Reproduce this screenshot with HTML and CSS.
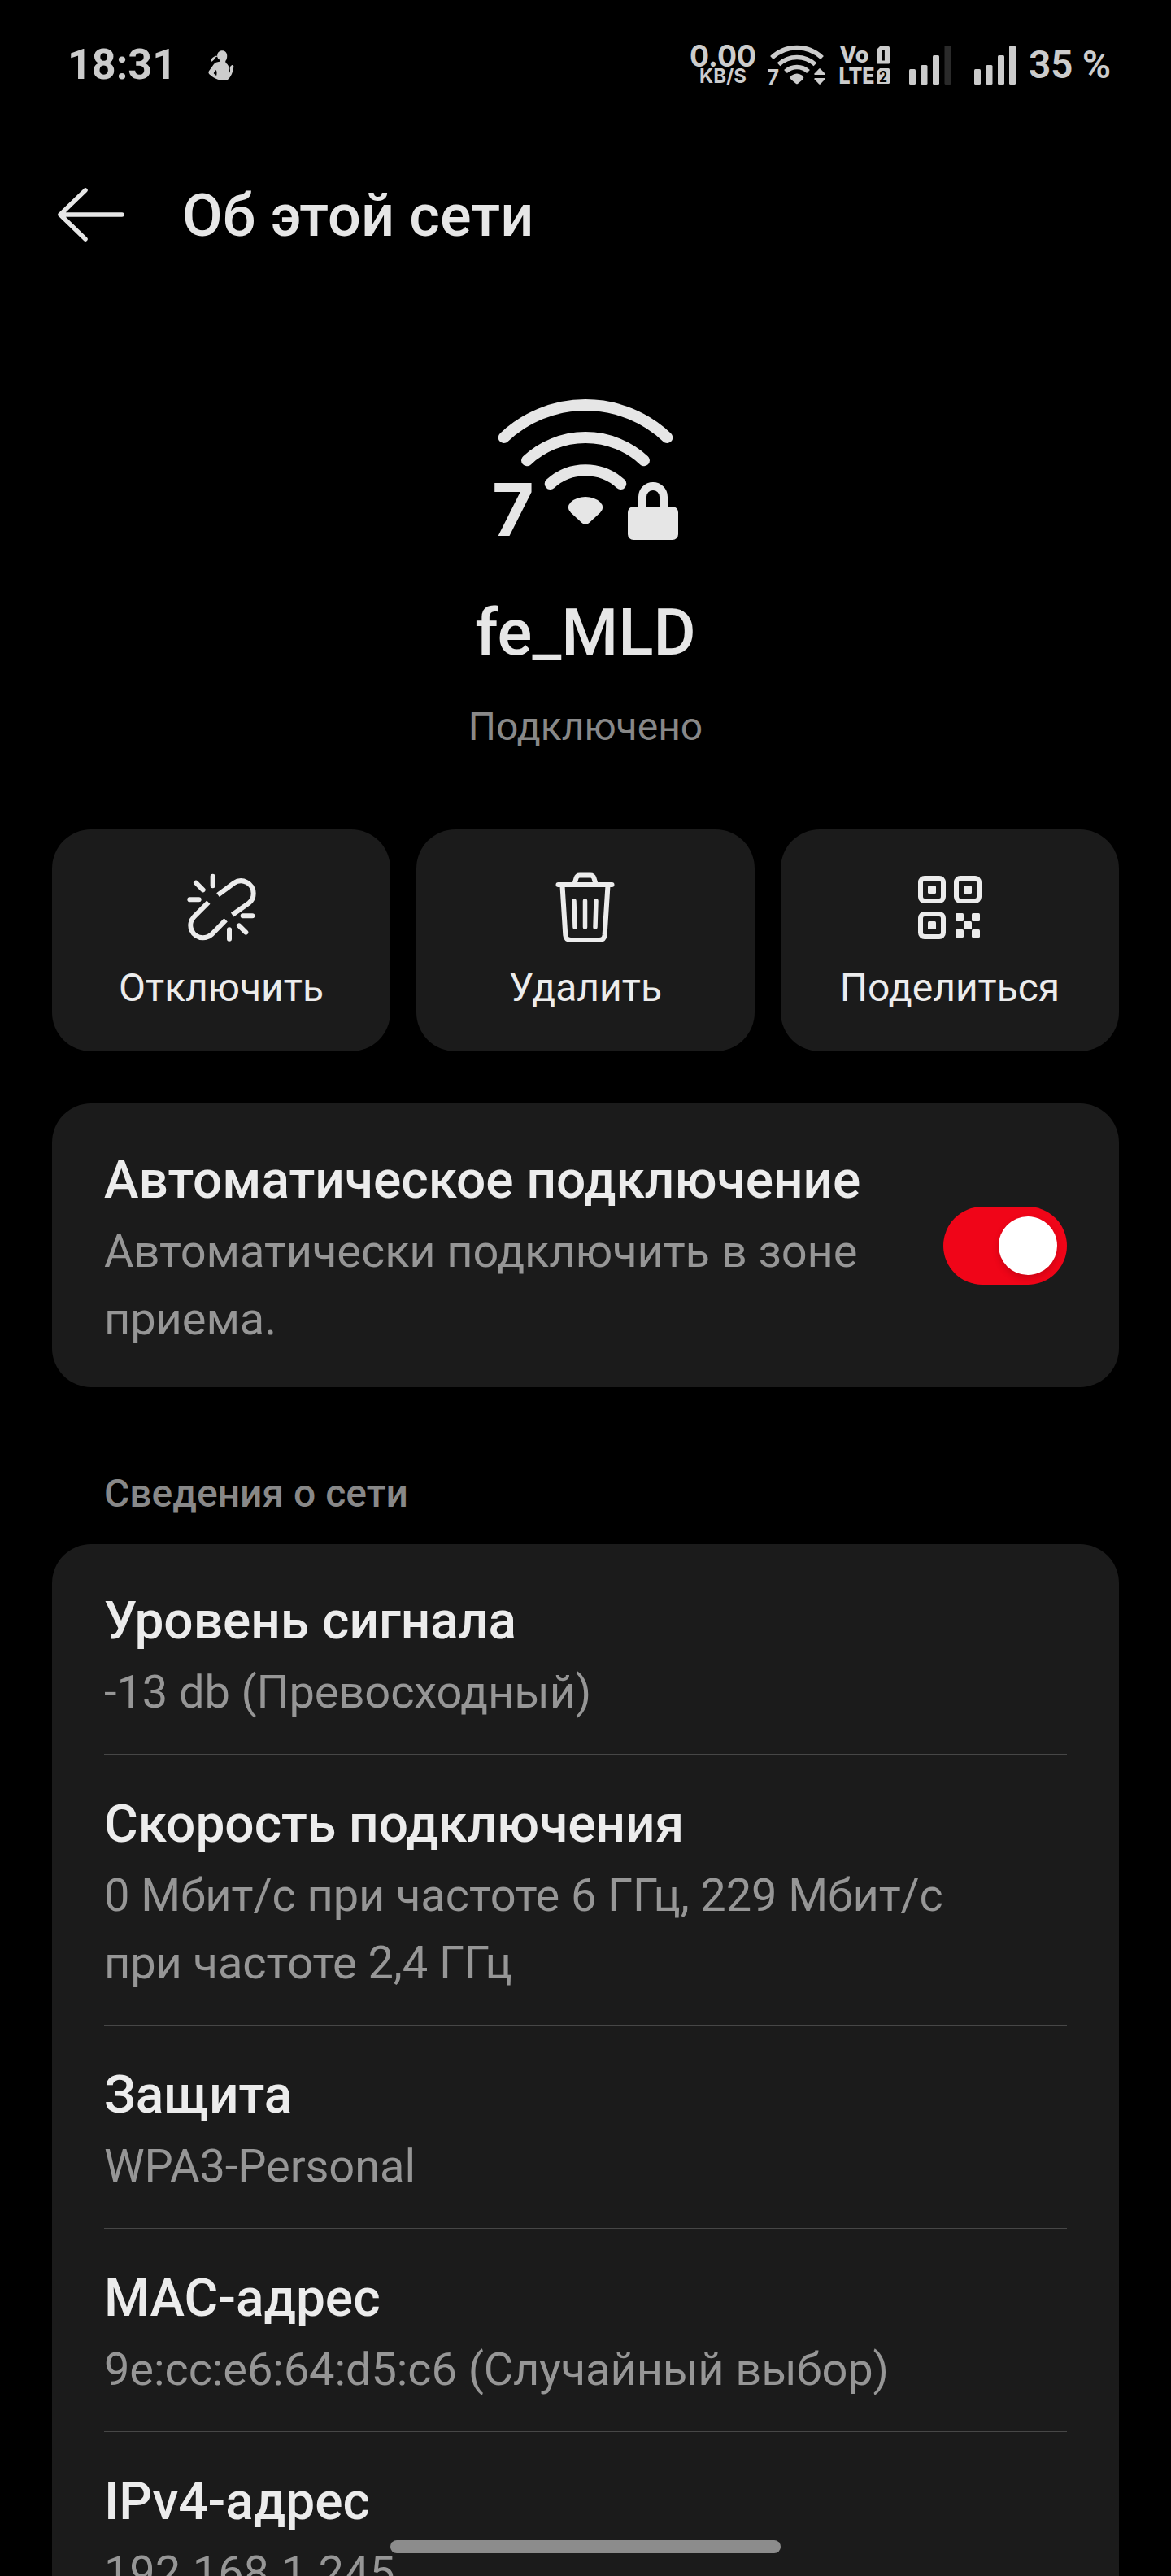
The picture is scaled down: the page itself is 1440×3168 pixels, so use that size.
FILE: index.html
```
<!DOCTYPE html>
<html lang="ru">
<head>
  <meta charset="UTF-8">
  <meta name="viewport" content="width=device-width, initial-scale=1.0">
  <title>Об этой сети</title>
  <link rel="stylesheet" href="styles.css">
</head>
<body>
  <!-- Строка состояния -->
  <div class="status-bar">
    <span class="clock">18:31</span>
    <svg class="app-icon" width="32" height="37" viewBox="590 95 95 110">
      <path d="M641 96c11 0 18 8 18 19 0 8-2 15-6 19l1 7c8 4 12 12 12 21v17c3-4 5-9 4-13-2-7 0-14 6-17 5-2 8 2 7 7-3 19-10 37-21 45-10 4-31 4-42-2-9-4-24-13-28-20-2-4 0-8 3-12l15-21c5-6 12-9 22-10l1-6c-6-3-9-8-10-13l-6 3c-3 8-9 13-18 17-1-9 8-19 19-22l5 0c0-12 8-19 18-19z"/>
      <path class="hole" d="M619 166c-5 5-8 9-9 13 3 3 6 6 10 8 2-7 2-14-1-21z"/>
    </svg>

    <svg class="status-icons" width="412" height="60" viewBox="840 50 412 60">
      <!-- Скорость сети -->
      <text class="inter" x="848" y="82" font-size="37" textLength="82" lengthAdjust="spacingAndGlyphs">0.00</text>
      <text class="inter" x="860" y="102" font-size="24" textLength="58" lengthAdjust="spacingAndGlyphs">KB/S</text>

      <!-- Wi-Fi 7 -->
      <g class="arc" stroke-width="5.6">
        <path d="M949 71A45 45 0 0 1 1011 71"/>
        <path d="M957.5 79.3A33 33 0 0 1 1002.5 79.3"/>
        <path d="M966 88A20.5 20.5 0 0 1 994 88"/>
      </g>
      <path d="M973 93Q980 88 987 93Q989.5 95.5 987 98L981.3 102.7Q980 103.8 978.7 102.7L973 98Q970.5 95.5 973 93Z"/>
      <text class="inter" x="943.5" y="104" font-size="25">7</text>
      <path d="M1007.5 84.3Q1008 84 1008.5 84.3L1014.5 90.5Q1015 92 1014 92H1002Q1001 92 1001.5 90.5Z"/>
      <path d="M1007.5 103.7Q1008 104 1008.5 103.7L1014.5 97.5Q1015 96 1014 96H1002Q1001 96 1001.5 97.5Z"/>

      <!-- VoLTE и номера SIM-карт -->
      <text class="inter bold" x="1032.5" y="77" font-size="27" textLength="36" lengthAdjust="spacingAndGlyphs">Vo</text>
      <text class="inter bold" x="1031.5" y="103" font-size="27" textLength="44" lengthAdjust="spacingAndGlyphs">LTE</text>
      <path d="M1082 57H1092.5Q1094 57 1094 58.5V77Q1094 78.5 1092.5 78.5H1079.5Q1078 78.5 1078 77V61Z"/>
      <path d="M1082 84H1092.5Q1094 84 1094 85.5V101.5Q1094 103 1092.5 103H1079.5Q1078 103 1078 101.5V88Z"/>
      <rect class="hole" x="1084.3" y="61" width="3.6" height="13.5"/>
      <text class="inter hole" x="1081" y="100.5" font-size="19" textLength="10" lengthAdjust="spacingAndGlyphs">2</text>

      <!-- Уровень сигнала -->
      <rect x="1118" y="85" width="8" height="19" rx="1.5"/>
      <rect x="1132.5" y="80" width="8" height="24" rx="1.5"/>
      <rect x="1147" y="68" width="8" height="36" rx="1.5"/>
      <rect class="off" x="1161.5" y="56" width="8" height="48" rx="1.5"/>
      <rect x="1198" y="85" width="8" height="19" rx="1.5"/>
      <rect x="1212.5" y="80" width="8" height="24" rx="1.5"/>
      <rect x="1227" y="68" width="8" height="36" rx="1.5"/>
      <rect x="1241" y="56" width="8" height="48" rx="1.5"/>
    </svg>
    <span class="battery">35 %</span>
  </div>

  <header class="header">
    <svg class="back" width="90" height="76" viewBox="68 226 90 76">
      <path d="M74 264H150M105 234L74 264L105 294"/>
    </svg>
    <h1>Об этой сети</h1>
  </header>

  <!-- Сведения о подключении -->
  <section class="network">
    <svg class="wifi" width="240" height="190" viewBox="600 480 240 190">
      <g class="arc" stroke-width="14">
        <path d="M619.7 538A145.8 145.8 0 0 1 820.3 538"/>
        <path d="M648 566.3A105.7 105.7 0 0 1 792 566.3"/>
        <path d="M676.7 595A64.5 64.5 0 0 1 763.3 595"/>
      </g>
      <path d="M702 617.5Q709 611 720 611T738 617.5Q744.5 624 738 630.5L724.5 643Q720 647 715.5 643L702 630.5Q695.5 624 702 617.5Z"/>
      <text class="inter" x="605" y="659" font-size="89">7</text>
      <rect x="772" y="623" width="62" height="41" rx="7"/>
      <path class="shackle" d="M790 626V611A13 13 0 0 1 816 611V626"/>
    </svg>
    <h2>fe_MLD</h2>
    <p>Подключено</p>
  </section>

  <div class="actions">
    <button class="action">
      <svg class="line" width="88" height="88" viewBox="535 185 264 264" stroke-width="18">
        <g stroke-linecap="round">
          <path d="M636 202V237M574 226L600 252M551 288H585"/>
          <path d="M747 348H782M733 384L758 409M697 399V433"/>
        </g>
        <path d="M655 271L714 227A46 46 0 0 1 786 265A46 46 0 0 1 769 301L708 344"/>
        <path d="M620 298L567 351A46 46 0 0 0 600 429A46 46 0 0 0 632 416L684 363"/>
      </svg>
      <span>Отключить</span>
    </button>
    <button class="action">
      <svg class="line" width="88" height="88" viewBox="676 1072 88 88" stroke-width="6">
        <path d="M686.5 1088H752.5" stroke-linecap="round"/>
        <path d="M706.5 1087L708.5 1080Q709.5 1076.5 713 1076.5H726Q729.5 1076.5 730.5 1080L732.5 1087"/>
        <path d="M691.5 1089L695.3 1150Q695.8 1156 702 1156H737Q743 1156 743.6 1150L747.5 1089"/>
        <path d="M706 1108L707 1140M719.5 1108V1140M733 1108L732 1140" stroke-width="5.5" stroke-linecap="round"/>
      </svg>
      <span>Удалить</span>
    </button>
    <button class="action">
      <svg class="line" width="88" height="88" viewBox="1124 1072 88 88" stroke-width="6">
        <rect x="1132" y="1080" width="28" height="28" rx="5"/>
        <rect x="1176" y="1080" width="28" height="28" rx="5"/>
        <rect x="1132" y="1124" width="28" height="28" rx="5"/>
        <g class="solid">
          <rect x="1141" y="1089" width="10" height="10" rx="1.5"/>
          <rect x="1185" y="1089" width="10" height="10" rx="1.5"/>
          <rect x="1141" y="1133" width="10" height="10" rx="1.5"/>
          <rect x="1175" y="1123" width="10" height="10" rx="1.5"/>
          <rect x="1195" y="1123" width="10" height="10" rx="1.5"/>
          <rect x="1185" y="1133" width="10" height="10" rx="1.5"/>
          <rect x="1175" y="1143" width="10" height="10" rx="1.5"/>
          <rect x="1195" y="1143" width="10" height="10" rx="1.5"/>
        </g>
      </svg>
      <span>Поделиться</span>
    </button>
  </div>

  <div class="card auto-connect">
    <div class="item">
      <h3>Автоматическое подключение</h3>
      <p>Автоматически подключить в зоне приема.</p>
    </div>
    <div class="toggle"><span class="knob"></span></div>
  </div>

  <h4 class="section-title">Сведения о сети</h4>

  <div class="card details">
    <div class="item">
      <h3>Уровень сигнала</h3>
      <p>-13 db (Превосходный)</p>
    </div>
    <div class="item">
      <h3>Скорость подключения</h3>
      <p>0 Мбит/с при частоте 6 ГГц, 229 Мбит/с при частоте 2,4 ГГц</p>
    </div>
    <div class="item">
      <h3>Защита</h3>
      <p>WPA3-Personal</p>
    </div>
    <div class="item">
      <h3>MAC-адрес</h3>
      <p>9e:cc:e6:64:d5:c6 (Случайный выбор)</p>
    </div>
    <div class="item">
      <h3>IPv4-адрес</h3>
      <p>192.168.1.245</p>
    </div>
  </div>

  <div class="home-bar"></div>
</body>
</html>
```
FILE: styles.css
```
* {
  box-sizing: border-box;
  margin: 0;
  padding: 0;
}
body {
  position: relative;
  width: 1440px;
  height: 3168px;
  overflow: hidden;
  background: #000;
  color: #e6e6e6;
  font-family: Roboto, sans-serif;
}
h1, h2, h3, h4 {
  font-weight: 500;
}
svg {
  display: block;
  flex: none;
  fill: #e6e6e6;
}

/* Строка состояния */
.status-bar {
  display: flex;
  align-items: center;
  height: 160px;
  padding-left: 83px;
  color: #ccc;
  font-weight: 700;
}
.status-bar svg {
  fill: #ccc;
}
.clock {
  width: 173px;
  font-size: 52px;
  line-height: 60px;
}
.battery {
  margin-left: 13px;
  font-size: 48px;
  font-weight: 600;
  line-height: 60px;
  letter-spacing: -0.3px;
}
.status-icons {
  margin-left: 552px;
  overflow: visible;
}
.status-bar .hole {
  fill: #000;
}
.status-bar .off {
  fill: #2a2a2a;
}
.status-bar .arc {
  stroke: #ccc;
  stroke-linecap: butt;
}
.inter {
  font-family: Inter, sans-serif;
  font-weight: 700;
}
.bold {
  font-weight: 800;
}
.arc {
  fill: none;
  stroke: #e6e6e6;
  stroke-linecap: round;
}

/* Заголовок */
.header {
  display: flex;
  align-items: center;
  gap: 66px;
  height: 208px;
  padding-left: 68px;
}
.back {
  fill: none;
  stroke: #e6e6e6;
  stroke-width: 5.5;
  stroke-linecap: round;
  stroke-linejoin: round;
}
.header h1 {
  padding-top: 4px;
  font-size: 72px;
  line-height: 84px;
  letter-spacing: 0.15px;
}

/* Сеть */
.network {
  display: flex;
  flex-direction: column;
  align-items: center;
  height: 652px;
  padding-top: 112px;
}
.shackle {
  fill: none;
  stroke: #e6e6e6;
  stroke-width: 10;
}
.network h2 {
  margin-top: 60px;
  font-size: 80px;
  line-height: 96px;
}
.network p {
  margin-top: 39px;
  font-size: 48px;
  line-height: 58px;
  color: #888;
}

/* Кнопки */
.actions {
  display: flex;
  gap: 32px;
  padding: 0 64px;
}
.action {
  display: flex;
  flex: 1;
  flex-direction: column;
  align-items: center;
  height: 273px;
  padding-top: 52px;
  border: none;
  border-radius: 48px;
  background: #1b1b1b;
  color: #ececec;
  font: 400 48px/58px Roboto, sans-serif;
}
.action span {
  margin-top: 26px;
}
.line {
  fill: none;
  stroke: #ececec;
}
.solid {
  fill: #ececec;
  stroke: none;
}

/* Карточки */
.card {
  margin: 0 64px;
  padding: 8px 64px;
  border-radius: 48px;
  background: #1b1b1b;
}
.item {
  padding: 49px 0 34px;
}
.item h3 {
  font-size: 64px;
  line-height: 76px;
  color: #ececec;
}
.item p {
  max-width: 1080px;
  margin-top: 8px;
  font-size: 56px;
  line-height: 83px;
  letter-spacing: -0.1px;
  color: #969696;
}
.auto-connect {
  display: flex;
  align-items: center;
  justify-content: space-between;
  height: 349px;
  margin-top: 64px;
}
.auto-connect .item {
  width: 960px;
}
.toggle {
  display: flex;
  align-items: center;
  justify-content: flex-end;
  width: 152px;
  height: 96px;
  padding: 0 12px;
  border-radius: 48px;
  background: #f00518;
}
.knob {
  width: 72px;
  height: 72px;
  border-radius: 50%;
  background: #fff;
  box-shadow: 0 4px 8px rgba(0, 0, 0, 0.15);
}
.section-title {
  margin: 102px 128px 0;
  font-size: 48px;
  line-height: 58px;
  color: #888;
}
.details {
  height: 1400px;
  margin-top: 33px;
}
.details .item + .item {
  padding-top: 48px;
  border-top: 1px solid #474747;
}

/* Полоса навигации */
.home-bar {
  position: absolute;
  bottom: 28px;
  left: 480px;
  width: 480px;
  height: 16px;
  border-radius: 8px;
  background: #8c8c8c;
}
```
